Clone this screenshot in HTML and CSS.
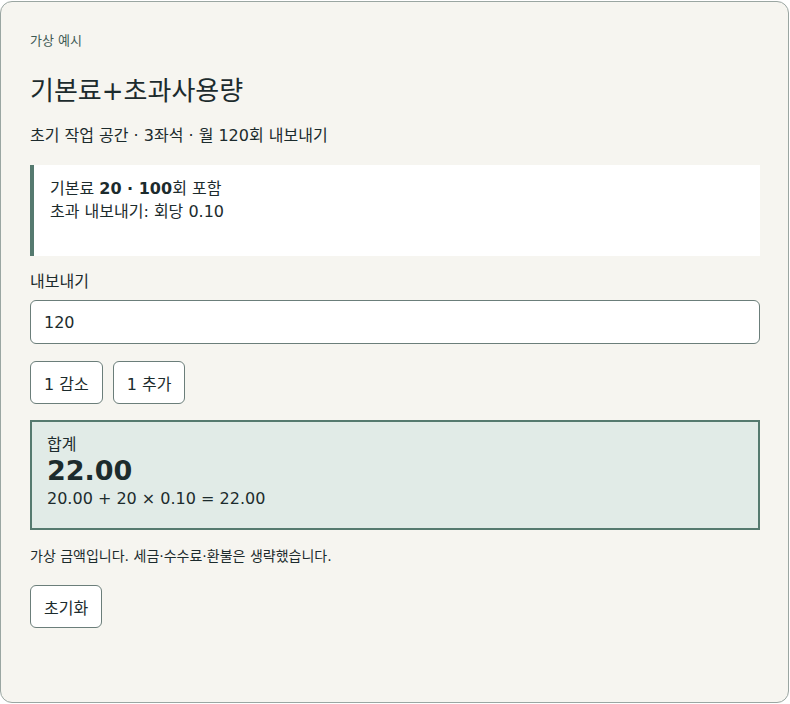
FILE: index.html
```html
<!DOCTYPE html>
<html lang="ko">
<head>
<meta charset="utf-8">
<title>기본료+초과사용량</title>
<link rel="stylesheet" href="styles.css">
</head>
<body>
<main class="card">
  <p class="eyebrow">가상 예시</p>
  <h1 class="title">기본료+초과사용량</h1>
  <p class="subtitle">초기 작업 공간 · 3좌석 · 월 120회 내보내기</p>
  <div class="plan">
    <p>기본료 <strong>20 · 100</strong>회 포함</p>
    <p>초과 내보내기: 회당 0.10</p>
  </div>
  <label class="label" for="exports">내보내기</label>
  <input class="input" id="exports" type="text" value="120">
  <div class="steps">
    <button class="btn" type="button">1 감소</button>
    <button class="btn" type="button">1 추가</button>
  </div>
  <section class="total">
    <div class="total-label">합계</div>
    <div class="total-value">22.00</div>
    <div class="total-formula">20.00 + 20 × 0.10 = 22.00</div>
  </section>
  <p class="note">가상 금액입니다. 세금·수수료·환불은 생략했습니다.</p>
  <button class="btn reset" type="button">초기화</button>
</main>
</body>
</html>
```
FILE: styles.css
```css
* { box-sizing: border-box; }
html, body { margin: 0; padding: 0; background: #ffffff; }
body {
  font-family: "DejaVu Sans", "Noto Sans CJK KR", sans-serif;
  color: #1c2b2d;
  padding: 1px 1px 1px 0;
}
.card {
  width: 789px;
  height: 702px;
  background: #f6f5f0;
  border: 1px solid #9aa6a2;
  border-radius: 12px;
  padding: 30px 28px 28px 29px;
  display: flex;
  flex-direction: column;
  align-items: flex-start;
}
.eyebrow {
  margin: 0;
  font-size: 13px;
  line-height: 18px;
  color: #3e5a55;
}
.title {
  margin: 24px 0 0;
  font-size: 26px;
  font-weight: 400;
  line-height: 34px;
}
.subtitle {
  margin: 16px 0 0;
  font-size: 16px;
  line-height: 24px;
}
.plan {
  margin-top: 17px;
  align-self: stretch;
  background: #ffffff;
  border-left: 4px solid #557a6f;
  padding: 12px 16px 33px;
  font-size: 16px;
  line-height: 23px;
}
.plan p { margin: 0; }
.plan strong { font-weight: 700; }
.label {
  margin-top: 14px;
  font-size: 16px;
  line-height: 24px;
}
.input {
  margin-top: 6px;
  align-self: stretch;
  height: 44px;
  border: 1px solid #6b7e7a;
  border-radius: 6px;
  background: #ffffff;
  padding: 0 13px;
  font-family: inherit;
  font-size: 16px;
  color: #1c2b2d;
}
.steps {
  margin-top: 17px;
  display: flex;
  gap: 10px;
}
.btn {
  height: 43px;
  min-width: 72px;
  padding: 0 13px;
  border: 1px solid #6b7e7a;
  border-radius: 6px;
  background: #ffffff;
  font-family: inherit;
  font-size: 16px;
  color: #1c2b2d;
}
.total {
  margin-top: 16px;
  align-self: stretch;
  background: #e1ebe7;
  border: 2px solid #557a6f;
  padding: 12px 15px 17px;
}
.total-label { font-size: 16px; line-height: 22px; }
.total-value { font-size: 27px; font-weight: 700; line-height: 30px; }
.total-formula { font-size: 16px; line-height: 25px; }
.note {
  margin: 16px 0 0;
  font-size: 14px;
  line-height: 20px;
}
.reset { margin-top: 19px; }
```
